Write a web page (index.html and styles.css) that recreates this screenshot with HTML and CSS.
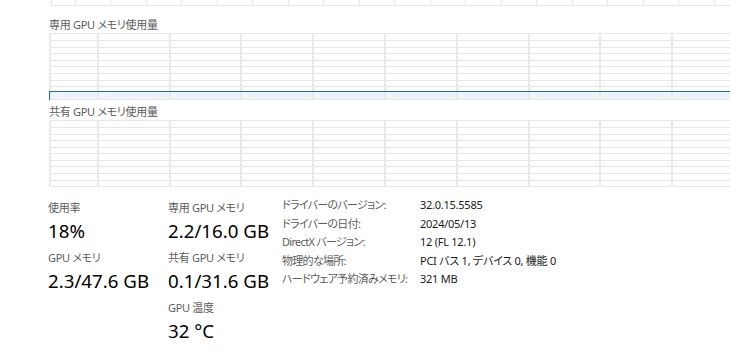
FILE: index.html
```html
<!DOCTYPE html>
<html lang="ja">
<head>
<meta charset="utf-8">
<link rel="stylesheet" href="styles.css">
</head>
<body>
<div class="page">
  <div class="chart-top">
    <svg width="679" height="6" class="grid">
      <g stroke="#e6e6e6" stroke-width="1">
        <line x1="0" y1="5.5" x2="679" y2="5.5"/>
        <line x1="0.5" y1="0" x2="0.5" y2="6"/>
        <line x1="24.5" y1="0" x2="24.5" y2="6"/>
        <line x1="59.5" y1="0" x2="59.5" y2="6"/>
        <line x1="95.5" y1="0" x2="95.5" y2="6"/>
        <line x1="130.5" y1="0" x2="130.5" y2="6"/>
        <line x1="166.5" y1="0" x2="166.5" y2="6"/>
        <line x1="201.5" y1="0" x2="201.5" y2="6"/>
        <line x1="237.5" y1="0" x2="237.5" y2="6"/>
        <line x1="272.5" y1="0" x2="272.5" y2="6"/>
        <line x1="308.5" y1="0" x2="308.5" y2="6"/>
        <line x1="343.5" y1="0" x2="343.5" y2="6"/>
        <line x1="379.5" y1="0" x2="379.5" y2="6"/>
        <line x1="414.5" y1="0" x2="414.5" y2="6"/>
        <line x1="450.5" y1="0" x2="450.5" y2="6"/>
        <line x1="485.5" y1="0" x2="485.5" y2="6"/>
        <line x1="521.5" y1="0" x2="521.5" y2="6"/>
        <line x1="556.5" y1="0" x2="556.5" y2="6"/>
        <line x1="592.5" y1="0" x2="592.5" y2="6"/>
        <line x1="627.5" y1="0" x2="627.5" y2="6"/>
        <line x1="663.5" y1="0" x2="663.5" y2="6"/>
      </g>
    </svg>
  </div>

  <section class="chart-section first">
    <div class="chart-label">専用 GPU メモリ使用量</div>
    <div class="chart">
      <svg width="681" height="67" class="grid">
        <rect x="0" y="58" width="681" height="9" fill="#eef4f9"/>
        <g stroke="#e6e6e6" stroke-width="1">
          <line x1="0" y1="0.5" x2="681" y2="0.5"/>
          <line x1="0" y1="7.5" x2="681" y2="7.5"/>
          <line x1="0" y1="14.5" x2="681" y2="14.5"/>
          <line x1="0" y1="20.5" x2="681" y2="20.5"/>
          <line x1="0" y1="27.5" x2="681" y2="27.5"/>
          <line x1="0" y1="33.5" x2="681" y2="33.5"/>
          <line x1="0" y1="40.5" x2="681" y2="40.5"/>
          <line x1="0" y1="47.5" x2="681" y2="47.5"/>
          <line x1="0" y1="53.5" x2="681" y2="53.5"/>
          <line x1="0" y1="66.5" x2="681" y2="66.5"/>
        </g>
        <g stroke="#e9e9e9" stroke-width="2">
          <line x1="1" y1="0" x2="1" y2="67"/>
          <line x1="49" y1="0" x2="49" y2="67"/>
          <line x1="121" y1="0" x2="121" y2="67"/>
          <line x1="192" y1="0" x2="192" y2="67"/>
          <line x1="264" y1="0" x2="264" y2="67"/>
          <line x1="336" y1="0" x2="336" y2="67"/>
          <line x1="408" y1="0" x2="408" y2="67"/>
          <line x1="480" y1="0" x2="480" y2="67"/>
          <line x1="551" y1="0" x2="551" y2="67"/>
          <line x1="623" y1="0" x2="623" y2="67"/>
        </g>
        <line x1="0" y1="58.5" x2="681" y2="58.5" stroke="#1f70a8" stroke-width="1"/>
        <line x1="0.5" y1="58" x2="0.5" y2="67" stroke="#1f70a8" stroke-width="1"/>
      </svg>
    </div>
  </section>

  <section class="chart-section second">
    <div class="chart-label">共有 GPU メモリ使用量</div>
    <div class="chart">
      <svg width="681" height="67" class="grid">
        <g stroke="#e6e6e6" stroke-width="1">
          <line x1="0" y1="0.5" x2="681" y2="0.5"/>
          <line x1="0" y1="7.5" x2="681" y2="7.5"/>
          <line x1="0" y1="14.5" x2="681" y2="14.5"/>
          <line x1="0" y1="20.5" x2="681" y2="20.5"/>
          <line x1="0" y1="27.5" x2="681" y2="27.5"/>
          <line x1="0" y1="33.5" x2="681" y2="33.5"/>
          <line x1="0" y1="40.5" x2="681" y2="40.5"/>
          <line x1="0" y1="46.5" x2="681" y2="46.5"/>
          <line x1="0" y1="53.5" x2="681" y2="53.5"/>
          <line x1="0" y1="60.5" x2="681" y2="60.5"/>
          <line x1="0" y1="66.5" x2="681" y2="66.5"/>
        </g>
        <g stroke="#e9e9e9" stroke-width="2">
          <line x1="1" y1="0" x2="1" y2="67"/>
          <line x1="49" y1="0" x2="49" y2="67"/>
          <line x1="121" y1="0" x2="121" y2="67"/>
          <line x1="192" y1="0" x2="192" y2="67"/>
          <line x1="264" y1="0" x2="264" y2="67"/>
          <line x1="336" y1="0" x2="336" y2="67"/>
          <line x1="408" y1="0" x2="408" y2="67"/>
          <line x1="480" y1="0" x2="480" y2="67"/>
          <line x1="551" y1="0" x2="551" y2="67"/>
          <line x1="623" y1="0" x2="623" y2="67"/>
        </g>
      </svg>
    </div>
  </section>

  <section class="stats">
    <div class="stat-col col-a">
      <div class="stat">
        <div class="stat-label">使用率</div>
        <div class="stat-value">18%</div>
      </div>
      <div class="stat">
        <div class="stat-label">GPU メモリ</div>
        <div class="stat-value">2.3/47.6 GB</div>
      </div>
    </div>
    <div class="stat-col col-b">
      <div class="stat">
        <div class="stat-label">専用 GPU メモリ</div>
        <div class="stat-value">2.2/16.0 GB</div>
      </div>
      <div class="stat">
        <div class="stat-label">共有 GPU メモリ</div>
        <div class="stat-value">0.1/31.6 GB</div>
      </div>
      <div class="stat">
        <div class="stat-label">GPU 温度</div>
        <div class="stat-value">32 °C</div>
      </div>
    </div>
    <dl class="props">
      <dt>ドライバーのバージョン:</dt><dd>32.0.15.5585</dd>
      <dt>ドライバーの日付:</dt><dd>2024/05/13</dd>
      <dt>DirectX バージョン:</dt><dd>12 (FL 12.1)</dd>
      <dt>物理的な場所:</dt><dd>PCI バス 1, デバイス 0, 機能 0</dd>
      <dt>ハードウェア予約済みメモリ:</dt><dd>321 MB</dd>
    </dl>
  </section>
</div>
</body>
</html>
```
FILE: styles.css
```css
html, body {
  margin: 0;
  padding: 0;
  background: #ffffff;
  overflow: hidden;
}

body {
  width: 730px;
  height: 353px;
  font-family: "Noto Sans", "Noto Sans CJK JP", sans-serif;
  font-feature-settings: "palt";
  color: #1a1a1a;
}

.page {
  display: flex;
  flex-direction: column;
}

.grid {
  display: block;
  shape-rendering: crispEdges;
}

.chart-top {
  margin-left: 51px;
  height: 6px;
}

.chart-section {
  display: flex;
  flex-direction: column;
}

.chart-section.first {
  margin-top: 11px;
}

.chart-section.second {
  margin-top: 4px;
}

.chart-label {
  margin-left: 49px;
  font-size: 11px;
  letter-spacing: -0.3px;
  line-height: 16px;
  color: #5c5c5c;
  white-space: nowrap;
}

.chart {
  margin-left: 49px;
  height: 67px;
  overflow: hidden;
}

.stats {
  display: flex;
  align-items: flex-start;
  margin-top: 13px;
  padding-left: 48px;
}

.stat-col {
  display: flex;
  flex-direction: column;
  gap: 4px;
}

.col-a {
  width: 120px;
}

.col-b {
  width: 114px;
}

.stat-label {
  font-size: 11px;
  letter-spacing: -0.3px;
  line-height: 16px;
  color: #5c5c5c;
  white-space: nowrap;
}

.stat-value {
  font-size: 18.7px;
  line-height: 30px;
  color: #000000;
  white-space: nowrap;
}

.props {
  margin: -4px 0 0 0;
  display: grid;
  grid-template-columns: 138px auto;
  grid-auto-rows: 18.5px;
  align-items: center;
  line-height: 16px;
  white-space: nowrap;
}

.props dt {
  font-size: 11px;
  letter-spacing: -0.7px;
  color: #5c5c5c;
}

.props dd {
  margin: 0;
  font-size: 11px;
  letter-spacing: -0.25px;
  color: #1a1a1a;
}
```
